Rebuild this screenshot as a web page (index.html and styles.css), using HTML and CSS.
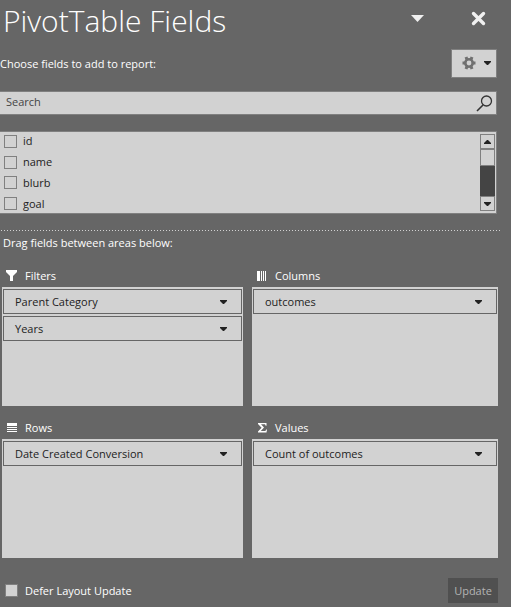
FILE: index.html
```html
<!DOCTYPE html>
<html lang="en">
<head>
<meta charset="utf-8">
<meta name="viewport" content="width=device-width, initial-scale=1">
<title>PivotTable Fields</title>
<link rel="stylesheet" href="styles.css">
</head>
<body>
<main class="pane">
  <header class="header">
    <h1 class="title">PivotTable Fields</h1>
    <button class="icon-button" type="button" aria-label="Pane options">
      <svg width="13" height="7" viewBox="0 0 13 7"><path d="M0 0H13L6.500 7Z" fill="#f0f0f0"/></svg>
    </button>
    <button class="icon-button close" type="button" aria-label="Close">
      <svg width="15" height="15" viewBox="0 0 15 15"><path d="M2.500 2.500L12.500 12.500M12.500 2.500L2.500 12.500" stroke="#f0f0f0" stroke-width="3.400" stroke-linecap="round"/></svg>
    </button>
  </header>

  <div class="tools">
    <p class="hint">Choose fields to add to report:</p>
    <button class="settings" type="button" aria-label="Tools">
      <svg width="14" height="14" viewBox="0 0 14 14"><g fill="none" stroke="#707070"><circle cx="7" cy="7" r="3.700" stroke-width="2.600"/><path d="M11 7h2.500M3 7H.5M9 3.500l1-2.500M5 3.500L4 1M9 10.500l1 2.500M5 10.500L4 13" stroke-width="3"/></g></svg>
      <svg width="7" height="4" viewBox="0 0 7 4"><path d="M0 0H7V1L4 4H3L0 1Z" fill="#222"/></svg>
    </button>
  </div>

  <div class="search">
    <input class="search-input" type="text" placeholder="Search" aria-label="Search fields">
    <svg width="17" height="17" viewBox="0 0 17 17"><g fill="none" stroke="#333"><circle cx="10.500" cy="6" r="5" stroke-width="1.300"/><path d="M7 10L1 16" stroke-width="1.600"/></g></svg>
  </div>

  <div class="fields">
    <div class="field-list">
      <label class="field"><input class="check" type="checkbox">id</label>
      <label class="field"><input class="check" type="checkbox">name</label>
      <label class="field"><input class="check" type="checkbox">blurb</label>
      <label class="field"><input class="check" type="checkbox">goal</label>
    </div>
    <div class="scrollbar">
      <button class="scroll-button" type="button" aria-label="Scroll up"><svg width="7" height="4" viewBox="0 0 7 4"><path d="M0 4H7V3L4 0H3L0 3Z" fill="#222"/></svg></button>
      <div class="track"><div class="thumb"></div></div>
      <button class="scroll-button" type="button" aria-label="Scroll down"><svg width="7" height="4" viewBox="0 0 7 4"><path d="M0 0H7V1L4 4H3L0 1Z" fill="#222"/></svg></button>
    </div>
  </div>

  <div class="divider"></div>
  <p class="drag-hint">Drag fields between areas below:</p>

  <div class="areas">
    <section class="area">
      <h2 class="area-title"><svg width="12" height="12" viewBox="0 0 12 12"><path d="M0 0H11V2L7 6V11H4V6L0 2Z" fill="#fff"/></svg>Filters</h2>
      <div class="drop">
        <button class="item" type="button">Parent Category<svg width="7" height="4" viewBox="0 0 7 4"><path d="M0 0H7V1L4 4H3L0 1Z" fill="#222"/></svg></button>
        <button class="item" type="button">Years<svg width="7" height="4" viewBox="0 0 7 4"><path d="M0 0H7V1L4 4H3L0 1Z" fill="#222"/></svg></button>
      </div>
    </section>
    <section class="area">
      <h2 class="area-title"><svg width="12" height="12" viewBox="0 0 12 12"><path d="M1 1h3v10H1zM5 1h1v10H5zM7 1h1v10H7zM9 1h1v10H9z" fill="#fff"/></svg>Columns</h2>
      <div class="drop">
        <button class="item" type="button">outcomes<svg width="7" height="4" viewBox="0 0 7 4"><path d="M0 0H7V1L4 4H3L0 1Z" fill="#222"/></svg></button>
      </div>
    </section>
    <section class="area">
      <h2 class="area-title"><svg width="12" height="12" viewBox="0 0 12 12"><path d="M1 1h10v3H1zM1 5h10v1H1zM1 7h10v1H1zM1 9h10v1H1z" fill="#fff"/></svg>Rows</h2>
      <div class="drop">
        <button class="item" type="button">Date Created Conversion<svg width="7" height="4" viewBox="0 0 7 4"><path d="M0 0H7V1L4 4H3L0 1Z" fill="#222"/></svg></button>
      </div>
    </section>
    <section class="area">
      <h2 class="area-title"><svg width="12" height="12" viewBox="0 0 12 12"><path d="M2 1H10.500V3.800H9.700L9 2.200H5L8 5.500L4.800 9H9.400L10.200 7.400H11L10.500 10.500H2V9.500L5.600 5.800L2 2Z" fill="#fff"/></svg>Values</h2>
      <div class="drop">
        <button class="item" type="button">Count of outcomes<svg width="7" height="4" viewBox="0 0 7 4"><path d="M0 0H7V1L4 4H3L0 1Z" fill="#222"/></svg></button>
      </div>
    </section>
  </div>

  <footer class="footer">
    <label class="defer"><input class="check" type="checkbox">Defer Layout Update</label>
    <button class="update" type="button">Update</button>
  </footer>
</main>
</body>
</html>
```
FILE: styles.css
```css
* {
  box-sizing: border-box;
}

body {
  margin: 0;
  background: #666;
  color: #fff;
  font-family: "Open Sans", "Noto Sans", sans-serif;
  font-size: 11px;
  line-height: 16px;
}

h1, h2, p {
  margin: 0;
  font-weight: 400;
}

button, input {
  margin: 0;
  padding: 0;
  border: 0;
  font: inherit;
  color: inherit;
}

svg {
  display: block;
  flex: none;
}

.pane {
  padding-right: 13px;
}

.header {
  display: flex;
  align-items: flex-start;
  padding: 0 12px 0 3px;
}

.title {
  flex: 1;
  font-size: 30px;
  font-weight: 300;
  line-height: 42px;
}

.icon-button {
  display: flex;
  align-items: center;
  height: 36px;
  background: none;
}

.close {
  margin-left: 47px;
}

.tools {
  display: flex;
  align-items: center;
  justify-content: space-between;
  margin-top: 7px;
  padding-right: 1px;
}

.settings {
  display: flex;
  align-items: center;
  justify-content: flex-end;
  gap: 8px;
  width: 46px;
  height: 29px;
  padding: 0 5px 2px 0;
  border: 1px solid #808080;
  background: #d2d2d2;
}

.search {
  display: flex;
  align-items: center;
  height: 24px;
  margin: 13px 1px 0 0;
  padding: 0 3px 0 6px;
  border: 1px solid #808080;
  border-left: 0;
  background: #d2d2d2;
}

.search-input {
  flex: 1;
  min-width: 0;
  padding-bottom: 2px;
  outline: 0;
  background: none;
  color: #333;
}

.search-input::placeholder {
  color: #444;
  opacity: 1;
}

.fields {
  display: flex;
  justify-content: space-between;
  margin: 16px 1px 0 0;
  padding: 2px 1px 2px 4px;
  border: 1px solid #808080;
  border-left: 0;
  background: #d2d2d2;
  color: #222;
}

.field-list {
  display: flex;
  flex-direction: column;
  gap: 6px;
  height: 77px;
}

.field {
  display: flex;
  align-items: center;
  gap: 6px;
  height: 15px;
  line-height: 14px;
}

.check {
  appearance: none;
  flex: none;
  width: 13px;
  height: 13px;
  border: 1px solid #808080;
  background: #d2d2d2;
}

.check:checked {
  background: #444;
}

.scrollbar {
  display: flex;
  flex-direction: column;
  width: 15px;
}

.scroll-button {
  display: flex;
  align-items: center;
  justify-content: center;
  height: 15px;
  border: 1px solid #808080;
  background: #d2d2d2;
}

.track {
  flex: 1;
  background: #444;
}

.thumb {
  height: 17px;
  border: 1px solid #808080;
  background: #d2d2d2;
}

.divider {
  height: 1px;
  margin: 16px -2px 0 0;
  background: repeating-linear-gradient(90deg, transparent 0 1px, #d2d2d2 1px 2px, transparent 2px 3px);
}

.drag-hint {
  margin: 4px 0 0 3px;
}

.areas {
  display: grid;
  grid-template-columns: 241fr 246fr;
  gap: 13px 9px;
  margin-top: 16px;
  padding-left: 2px;
}

.area-title {
  display: flex;
  align-items: center;
  gap: 7px;
  height: 20px;
  padding: 0 0 2px 4px;
  font-size: 11px;
}

.drop {
  display: flex;
  flex-direction: column;
  gap: 2px;
  min-height: 119px;
  padding: 2px 1px;
  background: #d2d2d2;
}

.item {
  display: flex;
  align-items: center;
  justify-content: space-between;
  height: 25px;
  padding: 0 14px 0 11px;
  border: 1px solid #666;
  background: #d2d2d2;
  color: #222;
}

.footer {
  display: flex;
  align-items: center;
  justify-content: space-between;
  margin-top: 20px;
  padding-left: 5px;
}

.defer {
  display: flex;
  align-items: center;
  gap: 7px;
}

.update {
  width: 50px;
  height: 25px;
  background: #505050;
  color: #b4b4b4;
}
```
